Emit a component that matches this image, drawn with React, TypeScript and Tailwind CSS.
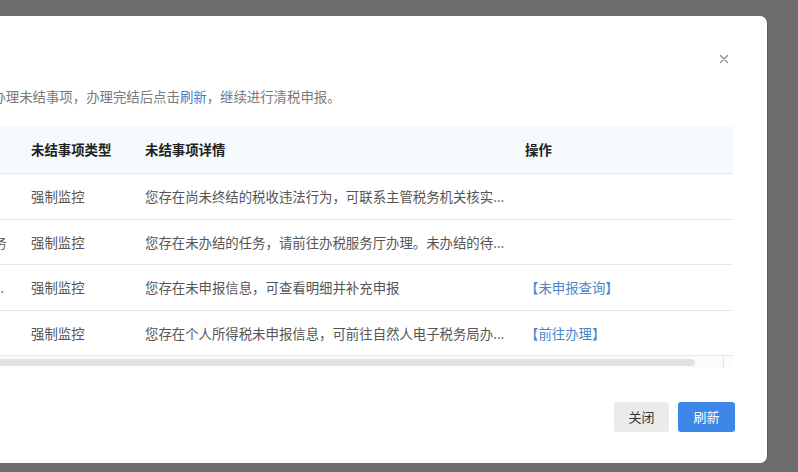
import React from "react";

const rows = [
  {
    name: "税收违法行为",
    nameCls: "flex justify-start overflow-hidden whitespace-nowrap pl-[12px]",
    type: "强制监控",
    detail: "您存在尚未终结的税收违法行为，可联系主管税务机关核实...",
    action: "",
  },
  {
    name: "您存在未办结的办税服务厅任务",
    nameCls: "flex justify-end overflow-hidden whitespace-nowrap pr-[12px]",
    type: "强制监控",
    detail: "您存在未办结的任务，请前往办税服务厅办理。未办结的待...",
    action: "",
  },
  {
    name: "您存在未申报的增值税及附加税...",
    nameCls: "flex justify-end overflow-hidden whitespace-nowrap pr-[15px]",
    type: "强制监控",
    detail: "您存在未申报信息，可查看明细并补充申报",
    action: "【未申报查询】",
  },
  {
    name: "个税未申报",
    nameCls: "flex justify-start overflow-hidden whitespace-nowrap pl-[12px]",
    type: "强制监控",
    detail: "您存在个人所得税未申报信息，可前往自然人电子税务局办...",
    action: "【前往办理】",
  },
];

export default function App() {
  return (
    <div className="w-[798px] h-[472px] overflow-hidden bg-[#6c6c6c] font-['Noto_Sans_CJK_SC','Noto_Sans',sans-serif] pt-[16px]">
      <div className="ml-[-300px] w-[1067px] h-[447px] bg-white rounded-[7px] flex flex-col pl-[24px] pr-[32px] shadow-[1px_0_0_#5e5e5e]">
        {/* header with close */}
        <div className="h-[70px] flex justify-end pt-[36px] pr-[4px]">
          <svg width="14" height="14" viewBox="0 0 14 14" className="text-[#8a8a8a]">
            <path d="M3.5 3.5 L10.5 10.5 M10.5 3.5 L3.5 10.5" stroke="currentColor" strokeWidth="1.3" strokeLinecap="round" />
          </svg>
        </div>
        {/* description */}
        <div className="h-[20px] leading-[20px] text-[13.4px] text-[#7a7a7a] whitespace-nowrap pl-[14px]">
          根据系统检测，您存在以下未结事项，请先办理未结事项，办理完结后点击<span className="text-[#3f7fd0]">刷新</span>，继续进行清税申报。
        </div>
        {/* table */}
        <div className="mt-[20px] w-[1009px] text-[13.4px]">
          <div className="grid grid-cols-[295px_114px_380px_220px] h-[48px] items-center bg-[#f5fafd] border-b border-[#e6e9ec] font-bold text-[#222]">
            <div className="pl-[12px]">未结事项名称</div>
            <div className="pl-[12px]">未结事项类型</div>
            <div className="pl-[12px]">未结事项详情</div>
            <div className="pl-[12px]">操作</div>
          </div>
          {rows.map((r, i) => (
            <div
              key={i}
              className="grid grid-cols-[295px_114px_380px_220px] h-[45.5px] items-center border-b border-[#e8e8e8] text-[#555]"
            >
              <div className={r.nameCls}>
                <span className="shrink-0">{r.name}</span>
              </div>
              <div className="pl-[12px] whitespace-nowrap">{r.type}</div>
              <div className="pl-[12px] whitespace-nowrap overflow-hidden">{r.detail}</div>
              <div className="pl-[12px] whitespace-nowrap text-[#4a86c8]">{r.action}</div>
            </div>
          ))}
          {/* horizontal scrollbar */}
          <div className="h-[12px] bg-[#fbfbfb] flex items-start">
            <div className="w-[971px] h-[7px] mt-[3px] rounded-full bg-[#e2e2e2]" />
            <div className="ml-[28px] w-px h-[11px] bg-[#e0e0e0]" />
          </div>
        </div>
        {/* footer */}
        <div className="mt-[34px] flex justify-end gap-[9px]">
          <button className="w-[55px] h-[30px] rounded-[3px] bg-[#ebebeb] text-[13px] text-[#333]">关闭</button>
          <button className="w-[57px] h-[30px] rounded-[3px] bg-[#3d87e8] text-[13px] text-white">刷新</button>
        </div>
      </div>
    </div>
  );
}
